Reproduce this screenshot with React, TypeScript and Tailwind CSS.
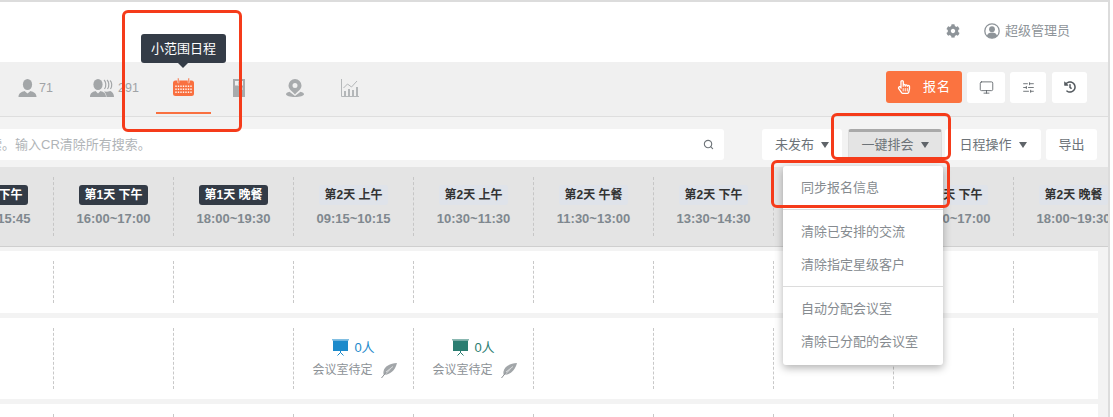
import React from "react";
import { Monitor, SlidersHorizontal, Search } from "lucide-react";
import { FaCog, FaRegHandPointer, FaHistory } from "react-icons/fa";

const cols = [
  { l: "第1天 下午", t: "14:45~15:45", d: true },
  { l: "第1天 下午", t: "16:00~17:00", d: true },
  { l: "第1天 晚餐", t: "18:00~19:30", d: true },
  { l: "第2天 上午", t: "09:15~10:15" },
  { l: "第2天 上午", t: "10:30~11:30" },
  { l: "第2天 午餐", t: "11:30~13:00" },
  { l: "第2天 下午", t: "13:30~14:30" },
  { l: "第2天 下午", t: "14:45~15:45" },
  { l: "第2天 下午", t: "16:00~17:00" },
  { l: "第2天 晚餐", t: "18:00~19:30" },
];

function Person() {
  return (
    <svg width="19" height="18" viewBox="0 0 19 18" fill="#a3a6a8">
      <ellipse cx="9.5" cy="5.5" rx="4.6" ry="5.5" />
      <path d="M0.5 18c0-3.5 2.5-5 6-6l3 2.5 3-2.500c3.500 1 6 2.500 6 6z" />
    </svg>
  );
}
function Group() {
  return (
    <svg width="24" height="18" viewBox="0 0 24 18" fill="#a3a6a8">
      <path d="M14 1c2 1.500 2.600 6 0.500 9M17 1c2 1.500 2.600 6 0.500 9M20 1.500c2 1.500 2.400 5.500 0.500 8.500" fill="none" stroke="#a3a6a8" strokeWidth="1.200" />
      <ellipse cx="8" cy="5.500" rx="4.600" ry="5.500" />
      <path d="M0 18c0-3.500 2-5 5.500-6l2.500 2.500 2.500-2.500c3.500 1 5.500 2.500 5.500 6z" />
      <path d="M16.500 18c0-2.500-.8-4-2.500-5.500l3 .2 3.500-.6c2 1 3.500 3 3.500 5.900z" />
    </svg>
  );
}
function Calendar() {
  return (
    <svg width="21" height="18" viewBox="0 0 21 18">
      <rect x="0" y="2.500" width="21" height="15.500" rx="2.500" fill="#f97040" />
      <rect x="4.500" y="0" width="1.500" height="5" rx=".7" fill="#f97040" stroke="#f0f0f0" strokeWidth=".5" />
      <rect x="15" y="0" width="1.500" height="5" rx=".7" fill="#f97040" stroke="#f0f0f0" strokeWidth=".5" />
      {[7.500, 10.500, 13.500].map((y) =>
        [3, 5.500, 8, 10.500, 13, 15.500, 18].map((x) => (
          <rect key={`${x}-${y}`} x={x - 0.700} y={y} width="1.400" height="1.400" fill="#fff" />
        )),
      )}
    </svg>
  );
}
function Building() {
  return (
    <svg width="12" height="18" viewBox="0 0 12 18" fill="#a8abad">
      <path fillRule="evenodd" d="M0 0h12v18H0zM2 2v4.500h8V2zM7 8.500v2.500h2.500V8.500z" />
      <path d="M5.500 2.500h.8v3.500h-.8z" />
    </svg>
  );
}
function Pin() {
  return (
    <svg width="18" height="18" viewBox="0 0 18 18" fill="#a8abad">
      <path fillRule="evenodd" d="M9 0a6.500 6.500 0 0 1 6.500 6.500C15.500 10.500 11 13 9 15.500 7 13 2.500 10.500 2.500 6.500A6.500 6.500 0 0 1 9 0zm0 4a2.500 2.500 0 1 0 0 5 2.500 2.500 0 0 0 0-5z" />
      <path d="M3.500 12.800C1.300 13.400 0 14.200 0 15.200 0 16.800 4 18 9 18s9-1.200 9-2.800c0-1-1.300-1.800-3.500-2.400L9 17z" />
    </svg>
  );
}
function ChartIcon() {
  return (
    <svg width="18" height="18" viewBox="0 0 18 18" fill="#b4b7b9">
      <path d="M.5 0v17.500H18" fill="none" stroke="#b4b7b9" />
      <path d="M3 17v-5h2v5zM7 17v-7h2v7zM11 17v-6h2v6zM15 17V8h2v9z" />
      <path d="M2.500 9 6.500 5l4 3 5.500-6" fill="none" stroke="#b4b7b9" />
    </svg>
  );
}
function UserCircle() {
  return (
    <svg width="16" height="16" viewBox="0 0 16 16">
      <circle cx="8" cy="8" r="7.200" fill="#fff" stroke="#8e9499" strokeWidth="1.300" />
      <circle cx="8" cy="6.200" r="2.900" fill="#8e9499" />
      <path d="M2.800 13c.6-2.500 2.600-3.500 5.200-3.500s4.600 1 5.200 3.500a7 7 0 0 1-10.400 0z" fill="#8e9499" />
    </svg>
  );
}
function Board({ color }: { color: string }) {
  return (
    <svg width="17" height="17" viewBox="0 0 17 17">
      <rect x="0" y="0" width="17" height="1.500" fill={color} opacity=".55" />
      <rect x="1" y="1.500" width="15" height="10.500" fill={color} />
      <path d="M8.500 12v2M8.500 13.500l-3 3M8.500 13.500l3 3" stroke={color} strokeWidth="1" fill="none" />
    </svg>
  );
}
function Feather() {
  return (
    <svg width="16" height="15" viewBox="0 0 16 15">
      <path d="M16 0C9 .5 3.500 3 2.500 8.500c-.3 1.500 0 3 .5 3.500C9 11.500 14 8 16 0z" fill="#a2a6a9" />
      <path d="M12 3.500 5 9M0.500 15 9 6.500" stroke="#fff" strokeWidth=".6" />
      <path d="M.5 15 5 9.500" stroke="#8c9094" strokeWidth="1" />
    </svg>
  );
}
function Caret() {
  return <span className="ml-[7px] inline-block w-0 h-0 border-x-[4px] border-x-transparent border-t-[6px] border-t-[#5f6469]" />;
}
function Row({ className, cells }: { className: string; cells?: boolean }) {
  return (
    <div className={`flex -ml-[66px] bg-white ${className}`}>
      {cols.map((_, i) => (
        <div key={i} className="w-[120px] shrink-0 border-r border-dashed border-[#c8c8c8] flex flex-col items-center justify-center">
          {cells && (i === 3 || i === 4) && (
            <>
              <div className={`flex items-center gap-[5px] text-[13px] leading-[17px] ${i === 3 ? "text-[#1c8acb]" : "text-[#2a7d71]"}`}>
                <Board color={i === 3 ? "#1c8acb" : "#2a7d71"} />
                <span>0人</span>
              </div>
              <div className="flex items-center gap-[8px] text-[12px] leading-[17px] text-[#8d9297] mt-[6px] ml-[2px]">
                <span>会议室待定</span>
                <Feather />
              </div>
            </>
          )}
        </div>
      ))}
    </div>
  );
}

export default function App() {
  return (
    <div className="relative w-[1113px] h-[417px] overflow-hidden bg-white font-['Liberation_Sans','Noto_Sans_CJK_SC',sans-serif]">
      <div className="w-[1110px] h-[417px] overflow-hidden bg-[#f3f3f3] border-r-2 border-[#dcdcdc]">
        {/* top header */}
        <header className="h-[62px] bg-white border-t-2 border-[#dcdcdc] shadow-[0_1px_3px_rgba(0,0,0,0.08)] flex items-center justify-end pb-[3px] pr-[38px] text-[#8e9499]">
          <FaCog size={14} className="mr-[24px]" />
          <UserCircle />
          <span className="ml-[5px] text-[13px]">超级管理员</span>
        </header>

        {/* toolbar */}
        <div className="relative h-[55px] bg-[#f0f0f0] border-b border-[#dedede] flex items-start justify-between pr-[21px]">
          <div className="flex items-center h-[52px] text-[12px] text-[#a0a3a6]">
            <div className="flex items-center ml-[18px] w-[72px] gap-[2px]"><Person /><span className="text-[12.500px]">71</span></div>
            <div className="flex items-center w-[83px] gap-[4px]"><Group /><span className="text-[12.500px]">291</span></div>
            <div className="w-[55px] -ml-[17px] mr-[22px] h-full flex justify-center items-center border-b-2 border-[#f97040]"><Calendar /></div>
            <div className="w-[53px]"><Building /></div>
            <div className="w-[55px]"><Pin /></div>
            <ChartIcon />
          </div>
          <div className="flex items-center gap-[5px] mt-[9px]">
            <button className="w-[76px] h-[32px] bg-[#fb7340] rounded-[3px] text-white text-[13px] flex items-center justify-center gap-[12px]">
              <FaRegHandPointer size={14} />
              <span className="tracking-[1px]">报名</span>
            </button>
            <button className="w-[38px] h-[31px] bg-white rounded-[3px] flex items-center justify-center text-[#555b60]"><Monitor size={15} strokeWidth={1.300} /></button>
            <button className="w-[36px] h-[31px] bg-white rounded-[3px] flex items-center justify-center text-[#555b60]"><SlidersHorizontal size={13} strokeWidth={1.500} /></button>
            <button className="w-[35px] h-[31px] ml-[1px] bg-white rounded-[3px] flex items-center justify-center text-[#555b60]"><FaHistory size={12} /></button>
          </div>
        </div>

        {/* search row */}
        <div className="h-[50px] pt-[12px] flex items-start text-[13px] text-[#6d7378]">
          <div className="w-[724px] h-[31px] bg-white rounded-r-[3px] flex items-center justify-between pr-[10px] text-[13px] text-[#b0b4b7] overflow-hidden">
            <span className="-ml-[11px]">索。输入CR清除所有搜索。</span>
            <Search size={11} strokeWidth={2.500} className="text-[#70767b]" />
          </div>
          <button className="ml-[38px] w-[80px] h-[31px] bg-white rounded-[3px] flex items-center pl-[13px]">未发布<Caret /></button>
          <button className="ml-[6px] w-[94px] h-[31px] bg-[#e4e4e4] border-t-[3px] border-[#a9a9a9] rounded-[3px] flex items-center justify-center pb-[2px] border-x border-x-[#dcdcdc]">一键排会<Caret /></button>
          <button className="ml-[3px] w-[96px] h-[31px] bg-white rounded-[3px] flex items-center justify-center">日程操作<Caret /></button>
          <button className="ml-[5px] w-[51px] h-[31px] bg-white rounded-[3px] flex items-center justify-center">导出</button>
        </div>

        {/* table */}
        <div className="flex -ml-[66px] h-[80px] py-[10px] bg-[#e4e4e4] border-b border-[#cfcfcf] overflow-hidden">
          {cols.map((c, i) => (
            <div key={i} className="w-[120px] shrink-0 border-r border-dashed border-[#c6c6c6] flex flex-col items-center">
              <span className={`mt-[8px] w-[69px] h-[20px] rounded-[3px] flex items-center justify-center text-[12px] font-bold whitespace-nowrap ${c.d ? "bg-[#333b46] text-white" : "bg-[#dfe3ea] text-[#333]"}`}>{c.l}</span>
              <span className="mt-[5px] text-[13px] leading-[18px] font-bold text-[#7f888f] whitespace-nowrap">{c.t}</span>
            </div>
          ))}
        </div>
        <div className="w-[1098px] overflow-hidden">
          <Row className="h-[62px] mt-[4px] py-[10px]" />
          <Row className="h-[81px] mt-[5px] py-[10px]" cells />
          <Row className="h-[40px] mt-[5px] py-[10px]" />
        </div>
      </div>

      {/* tooltip */}
      <div className="absolute left-[141px] top-[34px] w-[85px] h-[29px] rounded-[3px] bg-[#343c47] text-white text-[13px] flex items-center justify-center">
        小范围日程
        <span className="absolute left-[37px] top-[29px] w-0 h-0 border-x-[5px] border-x-transparent border-t-[5px] border-t-[#343c47]" />
      </div>

      {/* dropdown */}
      <div className="absolute left-[783px] top-[166px] w-[160px] h-[199px] bg-white rounded-[3px] shadow-[0_3px_8px_rgba(0,0,0,0.3)] text-[13px] text-[#868b90] pt-[5px]">
        <div className="h-[33px] pl-[18px] flex items-center">同步报名信息</div>
        <div className="h-px bg-[#dcdcdc] my-[5px]" />
        <div className="h-[33px] pl-[18px] flex items-center">清除已安排的交流</div>
        <div className="h-[33px] pl-[18px] flex items-center">清除指定星级客户</div>
        <div className="h-px bg-[#dcdcdc] my-[5px]" />
        <div className="h-[33px] pl-[18px] flex items-center">自动分配会议室</div>
        <div className="h-[33px] pl-[18px] flex items-center">清除已分配的会议室</div>
      </div>

      {/* red annotations */}
      <div className="absolute left-[122px] top-[10px] w-[120px] h-[122px] border-[3px] border-[#f53b1a] rounded-[6px]" />
      <div className="absolute left-[831px] top-[113px] w-[120px] h-[47px] border-[3px] border-[#f53b1a] rounded-[6px]" />
      <div className="absolute left-[771px] top-[160px] w-[179px] h-[48px] border-[3px] border-[#f53b1a] rounded-[6px]" />
    </div>
  );
}
